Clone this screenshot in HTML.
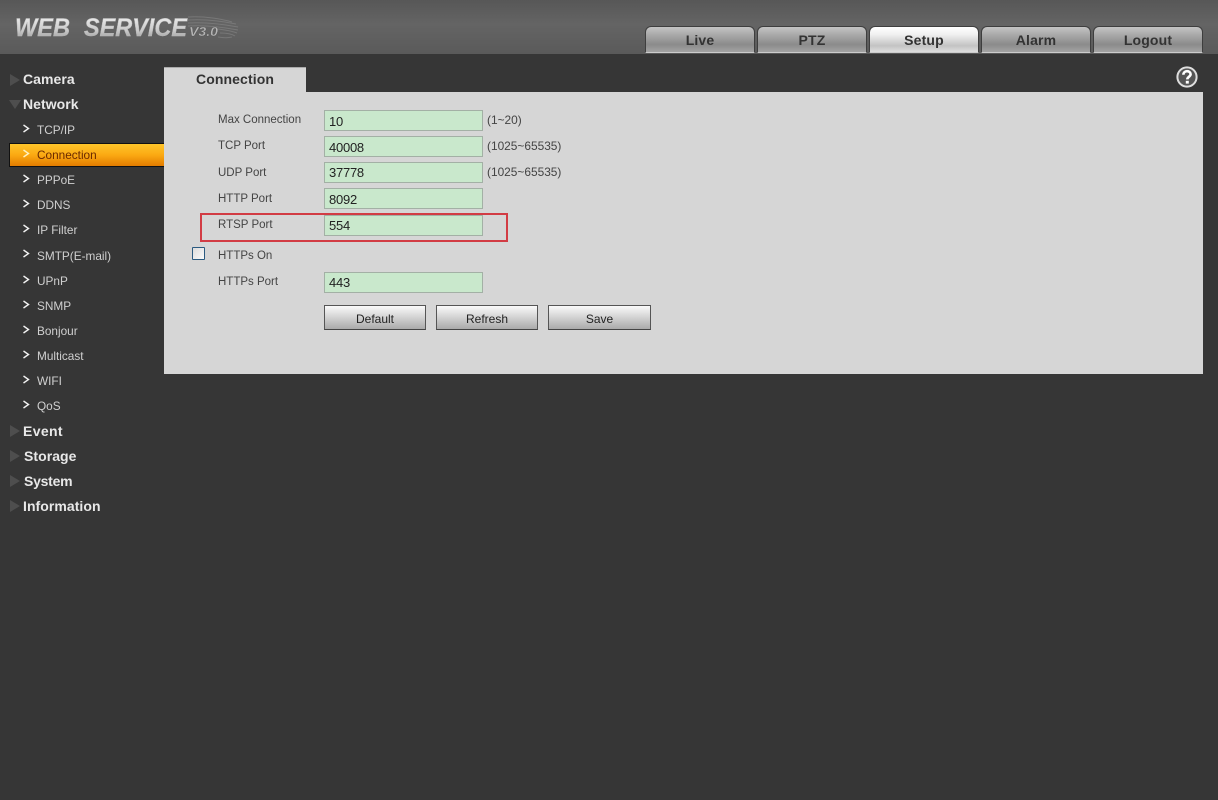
<!DOCTYPE html>
<html>
<head>
<meta charset="utf-8">
<title>Web Service</title>
<style>
html,body{margin:0;padding:0;width:1218px;height:800px;overflow:hidden;background:#363636;font-family:"Liberation Sans",sans-serif}
div,span,svg{position:absolute;white-space:nowrap}
#hd{left:0;top:0;width:1218px;height:54px;background:linear-gradient(#575757,#646464 45%,#5a5a5a)}
.tab{top:26px;width:110px;height:27px;box-sizing:border-box;border:1px solid #3e3e3e;border-bottom:1px solid #ccc;border-radius:6px 6px 0 0;background:linear-gradient(#c4c4c4,#a6a6a6 35%,#8b8b8b 70%,#a3a3a3);text-align:center;font:bold 14px/26px "Liberation Sans",sans-serif;letter-spacing:.15px;color:#333}
.tab.on{background:linear-gradient(#fff,#f0f0f0 30%,#c3c3c3 75%,#dedede)}
.m{left:23px;font:bold 14px/18px "Liberation Sans",sans-serif;letter-spacing:.05px;color:#e8e8e8}
.s{left:37px;font:11.8px/16px "Liberation Sans",sans-serif;color:#d0d0d0}
.tri{left:10px;width:0;height:0;border-left:10px solid #4e4e4e;border-top:6px solid transparent;border-bottom:6px solid transparent}
.chev{left:22px;width:8px;height:10px}
#sel{left:9px;top:143px;width:155px;height:24px;box-sizing:border-box;border:1px solid #111;border-right:0;background:linear-gradient(#ffc52a,#fba912 50%,#e27c00)}
#panel{left:164px;top:92px;width:1039px;height:282px;background:#d6d6d6}
#ptab{left:164px;top:67px;width:142px;height:26px;background:#d6d6d6;border-top:1px solid #aaa;box-sizing:border-box;text-align:center;font:bold 14px/23px "Liberation Sans",sans-serif;letter-spacing:.1px;color:#333}
.l{left:218px;font:11.5px/15px "Liberation Sans",sans-serif;color:#444}
.i{left:324px;width:159px;height:21px;box-sizing:border-box;background:#c9e8cc;border:1px solid #a3b0a5;font:13px/20px "Liberation Sans",sans-serif;letter-spacing:-.25px;color:#222;padding-left:4px}
.h{left:487px;font:11.9px/15px "Liberation Sans",sans-serif;color:#444}
.b{top:305px;height:25px;width:102px;box-sizing:border-box;border:1px solid #555;border-bottom-color:#444;background:linear-gradient(#fafafa,#dedede 35%,#aaa);text-align:center;font:12px/26px "Liberation Sans",sans-serif;color:#222}
.r{background:#d23c44}
</style>
</head>
<body>
<div id="hd"></div>

<svg style="left:0;top:0" width="250" height="54" viewBox="0 0 250 54">
<defs><linearGradient id="g" x1="0" y1="0" x2="0" y2="1"><stop offset="0" stop-color="#f2f2f2"/><stop offset=".6" stop-color="#c9c9c9"/><stop offset="1" stop-color="#8f8f8f"/></linearGradient></defs>
<g stroke="#8a8a8a" stroke-width="1" fill="none" opacity=".55">
<path d="M188 17C205 16 222 19 232 22"/><path d="M188 20C205 19 222 21 236 24"/><path d="M188 23C205 22 222 24 238 27"/><path d="M188 26C205 25 222 27 238 30"/><path d="M218 29C226 30 232 31 237 33"/><path d="M220 33C226 33 232 34 235 36"/><path d="M218 37C224 38 228 38 232 37"/>
</g>
<text x="15" y="36" font-family="Liberation Sans" font-size="25" font-weight="bold" font-style="italic" fill="url(#g)" stroke="#bbb" stroke-width=".4" textLength="55" lengthAdjust="spacingAndGlyphs">WEB</text>
<text x="84" y="36" font-family="Liberation Sans" font-size="25" font-weight="bold" font-style="italic" fill="url(#g)" stroke="#bbb" stroke-width=".4" textLength="103" lengthAdjust="spacingAndGlyphs">SERVICE</text>
<text x="189" y="36" font-family="Liberation Sans" font-size="13" font-weight="bold" font-style="italic" fill="#b5b5b5" stroke="#3a3a3a" stroke-width=".2" textLength="29" lengthAdjust="spacingAndGlyphs">V3.0</text>
</svg>

<div class="tab" style="left:645px">Live</div>
<div class="tab" style="left:757px">PTZ</div>
<div class="tab on" style="left:869px">Setup</div>
<div class="tab" style="left:981px">Alarm</div>
<div class="tab" style="left:1093px">Logout</div>

<svg style="left:1176px;top:66px" width="22" height="22" viewBox="0 0 22 22">
<circle cx="11" cy="11" r="9.6" fill="#555" stroke="#dedede" stroke-width="2"/>
<path d="M7.4 8.8C7.4 6.6 9 5.2 11 5.2C13.1 5.2 14.6 6.5 14.6 8.3C14.6 10.7 11.3 10.8 11.3 13.4" fill="none" stroke="#fff" stroke-width="2.6"/>
<rect x="9.8" y="14.8" width="3" height="2.8" fill="#fff"/>
</svg>

<div class="tri" style="top:74px"></div>
<div class="m" style="top:70px">Camera</div>
<div style="left:9px;top:100px;width:0;height:0;border-top:9px solid #4e4e4e;border-left:6px solid transparent;border-right:6px solid transparent"></div>
<div class="m" style="top:95px">Network</div>

<div id="sel"></div>

<div class="s" style="top:122px">TCP/IP</div>
<div class="s" style="top:147px;color:#6a2a00">Connection</div>
<div class="s" style="top:172px">PPPoE</div>
<div class="s" style="top:197px">DDNS</div>
<div class="s" style="top:222px">IP Filter</div>
<div class="s" style="top:248px">SMTP(E-mail)</div>
<div class="s" style="top:273px">UPnP</div>
<div class="s" style="top:298px">SNMP</div>
<div class="s" style="top:323px">Bonjour</div>
<div class="s" style="top:348px">Multicast</div>
<div class="s" style="top:373px">WIFI</div>
<div class="s" style="top:398px">QoS</div>

<svg class="chev" style="top:124px" viewBox="0 0 8 10"><path d="M1.5 1L6.5 4.5L1.5 8" fill="none" stroke="#f2f2f2" stroke-width="1.4"/></svg>
<svg class="chev" style="top:149px" viewBox="0 0 8 10"><path d="M1.5 1L6.5 4.5L1.5 8" fill="none" stroke="#fff2c0" stroke-width="1.4"/></svg>
<svg class="chev" style="top:174px" viewBox="0 0 8 10"><path d="M1.5 1L6.5 4.5L1.5 8" fill="none" stroke="#f2f2f2" stroke-width="1.4"/></svg>
<svg class="chev" style="top:199px" viewBox="0 0 8 10"><path d="M1.5 1L6.5 4.5L1.5 8" fill="none" stroke="#f2f2f2" stroke-width="1.4"/></svg>
<svg class="chev" style="top:224px" viewBox="0 0 8 10"><path d="M1.5 1L6.5 4.5L1.5 8" fill="none" stroke="#f2f2f2" stroke-width="1.4"/></svg>
<svg class="chev" style="top:249px" viewBox="0 0 8 10"><path d="M1.5 1L6.5 4.5L1.5 8" fill="none" stroke="#f2f2f2" stroke-width="1.4"/></svg>
<svg class="chev" style="top:275px" viewBox="0 0 8 10"><path d="M1.5 1L6.5 4.5L1.5 8" fill="none" stroke="#f2f2f2" stroke-width="1.4"/></svg>
<svg class="chev" style="top:300px" viewBox="0 0 8 10"><path d="M1.5 1L6.5 4.5L1.5 8" fill="none" stroke="#f2f2f2" stroke-width="1.4"/></svg>
<svg class="chev" style="top:325px" viewBox="0 0 8 10"><path d="M1.5 1L6.5 4.5L1.5 8" fill="none" stroke="#f2f2f2" stroke-width="1.4"/></svg>
<svg class="chev" style="top:350px" viewBox="0 0 8 10"><path d="M1.5 1L6.5 4.5L1.5 8" fill="none" stroke="#f2f2f2" stroke-width="1.4"/></svg>
<svg class="chev" style="top:375px" viewBox="0 0 8 10"><path d="M1.5 1L6.5 4.5L1.5 8" fill="none" stroke="#f2f2f2" stroke-width="1.4"/></svg>
<svg class="chev" style="top:400px" viewBox="0 0 8 10"><path d="M1.5 1L6.5 4.5L1.5 8" fill="none" stroke="#f2f2f2" stroke-width="1.4"/></svg>

<div class="tri" style="top:425px"></div>
<div class="m" style="top:422px;letter-spacing:.35px">Event</div>
<div class="tri" style="top:450px"></div>
<div class="m" style="top:447px;left:24px">Storage</div>
<div class="tri" style="top:475px"></div>
<div class="m" style="top:472px;left:24px;letter-spacing:-.25px">System</div>
<div class="tri" style="top:500px"></div>
<div class="m" style="top:497px">Information</div>

<div id="panel"></div>
<div id="ptab">Connection</div>

<div class="l" style="top:113px">Max Connection</div>
<div class="i" style="top:110px;line-height:21px">10</div>
<div class="h" style="top:113px">(1~20)</div>

<div class="l" style="top:139px">TCP Port</div>
<div class="i" style="top:136px;line-height:21px">40008</div>
<div class="h" style="top:139px">(1025~65535)</div>

<div class="l" style="top:166px">UDP Port</div>
<div class="i" style="top:162px">37778</div>
<div class="h" style="top:165px">(1025~65535)</div>

<div class="l" style="top:192px">HTTP Port</div>
<div class="i" style="top:188px;line-height:21px">8092</div>

<div class="l" style="top:218px">RTSP Port</div>
<div class="i" style="top:215px">554</div>
<div class="r" style="left:200px;top:213px;width:308px;height:2px"></div>
<div class="r" style="left:200px;top:240px;width:308px;height:2px"></div>
<div class="r" style="left:200px;top:213px;width:2px;height:29px"></div>
<div class="r" style="left:506px;top:213px;width:2px;height:29px"></div>

<div style="left:192px;top:247px;width:13px;height:13px;box-sizing:border-box;border:1px solid #2b5a80;border-radius:1px;background:linear-gradient(135deg,#dcdcdc,#fafafa)"></div>
<div class="l" style="top:249px">HTTPs On</div>

<div class="l" style="top:275px">HTTPs Port</div>
<div class="i" style="top:272px">443</div>

<div class="b" style="left:324px">Default</div>
<div class="b" style="left:436px">Refresh</div>
<div class="b" style="left:548px;width:103px">Save</div>
</body>
</html>
